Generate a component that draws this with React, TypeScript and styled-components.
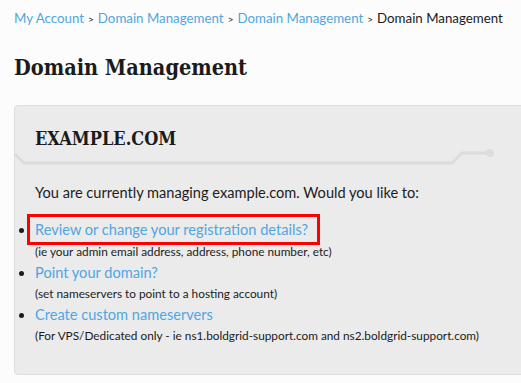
import styled, { createGlobalStyle } from 'styled-components';

const GlobalStyle = createGlobalStyle`
  html, body {
    margin: 0;
    background: #fcfcfc;
    overflow: hidden;
  }
  body {
    font-family: Lato, "Noto Sans", sans-serif;
    color: #1b1b1b;
  }
`;

const Page = styled.div`
  padding: 8px 0 0 14px;
  width: 521px;
  height: 383px;
  box-sizing: border-box;
`;

const Breadcrumb = styled.nav`
  font-size: 13.3px;
  line-height: 20px;
  white-space: nowrap;
`;

const Crumb = styled.a<{ $current?: boolean }>`
  color: ${({ $current }) => ($current ? '#1b1b1b' : '#4ea6e2')};
  text-decoration: none;
`;

const Sep = styled.span`
  font-size: 10px;
  margin: 0 4px;
`;

const Title = styled.h1`
  font-family: "DejaVu Serif Condensed", "DejaVu Serif", serif;
  font-weight: 600;
  font-size: 21.5px;
  margin: 24px 0 0;
  line-height: 30px;
`;

const Panel = styled.section`
  margin-top: 22px;
  margin-right: -30px;
  background: #ebebeb;
  border: 1px solid #dedede;
  border-radius: 4px;
  min-height: 268px;
`;

const PanelHeader = styled.header`
  display: flex;
  flex-direction: column;
`;

const PanelTitle = styled.h2`
  font-family: "DejaVu Serif Condensed", "DejaVu Serif", serif;
  font-weight: 600;
  font-size: 18px;
  line-height: 24px;
  margin: 21px 0 0 20px;
`;

const Circuit = styled.svg`
  display: block;
  margin-top: -2px;
`;

const PanelBody = styled.div`
  padding: 14px 20px 20px 20px;
  font-size: 14.6px;
`;

const Intro = styled.p`
  margin: 0 0 15px;
  line-height: 20px;
`;

const Options = styled.ul`
  margin: 0;
  padding: 0;
  list-style: disc outside;
`;

const Option = styled.li`
  line-height: 21px;
`;

const OptionLink = styled.a<{ $highlight?: boolean }>`
  color: #4ea6e2;
  text-decoration: none;
  display: inline-block;
  ${({ $highlight }) =>
    $highlight
      ? `
    border: 3px solid #ff0000;
    padding: 2px 9px 2px 5px;
    margin: -4px 0 -4px -8px;
  `
      : ''}
`;

const Note = styled.div`
  font-size: 11.8px;
  line-height: 21px;
`;

const options = [
  { label: 'Review or change your registration details?', note: '(ie your admin email address, address, phone number, etc)', highlight: true },
  { label: 'Point your domain?', note: '(set nameservers to point to a hosting account)' },
  { label: 'Create custom nameservers', note: '(For VPS/Dedicated only - ie ns1.boldgrid-support.com and ns2.boldgrid-support.com)' },
];

export default function App() {
  return (
    <Page>
      <GlobalStyle />
      <Breadcrumb>
        <Crumb href="#">My Account</Crumb>
        <Sep>&gt;</Sep>
        <Crumb href="#">Domain Management</Crumb>
        <Sep>&gt;</Sep>
        <Crumb href="#">Domain Management</Crumb>
        <Sep>&gt;</Sep>
        <Crumb $current>Domain Management</Crumb>
      </Breadcrumb>
      <Title>Domain Management</Title>
      <Panel>
        <PanelHeader>
          <PanelTitle>EXAMPLE.COM</PanelTitle>
          <Circuit width="490" height="20" viewBox="0 0 490 20">
            <path d="M0 5 L9 14 L437 14 L447 4 L475 4" fill="none" stroke="#dcdcdc" strokeWidth="3" />
            <circle cx="475" cy="4" r="4" fill="#dcdcdc" />
          </Circuit>
        </PanelHeader>
        <PanelBody>
          <Intro>You are currently managing example.com. Would you like to:</Intro>
          <Options>
            {options.map((o) => (
              <Option key={o.label}>
                <OptionLink href="#" $highlight={o.highlight}>{o.label}</OptionLink>
                <Note>{o.note}</Note>
              </Option>
            ))}
          </Options>
        </PanelBody>
      </Panel>
    </Page>
  );
}
